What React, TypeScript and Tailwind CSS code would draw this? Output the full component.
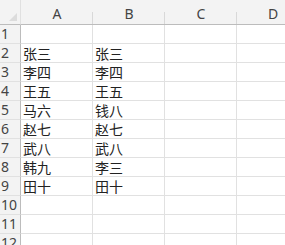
const cols = ['A', 'B', 'C', 'D'];
const data: [string, string][] = [
  ['', ''],
  ['张三', '张三'],
  ['李四', '李四'],
  ['王五', '王五'],
  ['马六', '钱八'],
  ['赵七', '赵七'],
  ['武八', '武八'],
  ['韩九', '李三'],
  ['田十', '田十'],
  ['', ''],
  ['', ''],
  ['', ''],
];

export default function App() {
  return (
    <div
      className="w-[285px] h-[245px] overflow-hidden bg-white text-[#222]"
      style={{ fontFamily: '"Noto Sans", "Noto Sans CJK SC", sans-serif' }}
    >
      <div className="grid grid-cols-[21px_72px_72px_72px_72px] w-[309px]">
        {/* header */}
        <div className="h-[25px] bg-[#f3f3f3] border-b border-[#bcbcbc] border-r border-r-[#e0e0e0] flex items-end justify-end pr-[3px] pb-[3px]">
          <svg width="8" height="8" viewBox="0 0 8 8">
            <polygon points="8,0 8,8 0,8" fill="#dcdcdc" />
          </svg>
        </div>
        {cols.map((c) => (
          <div
            key={c}
            className="h-[25px] bg-[#f3f3f3] border-b border-[#bcbcbc] relative flex items-end justify-center pb-[1px] text-[14px] text-[#444]"
          >
            <span className="leading-[18px]">{c}</span>
            <div className="absolute right-0 top-[12px] bottom-0 w-px bg-[#d8d8d8]" />
          </div>
        ))}
        {data.map((r, i) => (
          <Row key={i} n={i + 1} a={r[0]} b={r[1]} />
        ))}
      </div>
    </div>
  );
}

function Row({ n, a, b }: { n: number; a: string; b: string }) {
  const cell = 'h-[19px] border-b border-r border-[#e1e1e1] pl-[2px] text-[14px] leading-[18px] whitespace-nowrap';
  return (
    <>
      <div className="h-[19px] bg-[#f3f3f3] border-b border-[#e1e1e1] border-r border-r-[#bcbcbc] text-[14px] leading-[18px] text-[#444] pl-[1px] overflow-hidden">
        {n}
      </div>
      <div className={cell} style={{ fontFamily: '"Noto Sans CJK SC", sans-serif' }}>{a}</div>
      <div className={cell} style={{ fontFamily: '"Noto Sans CJK SC", sans-serif' }}>{b}</div>
      <div className={cell} />
      <div className={cell} />
    </>
  );
}
